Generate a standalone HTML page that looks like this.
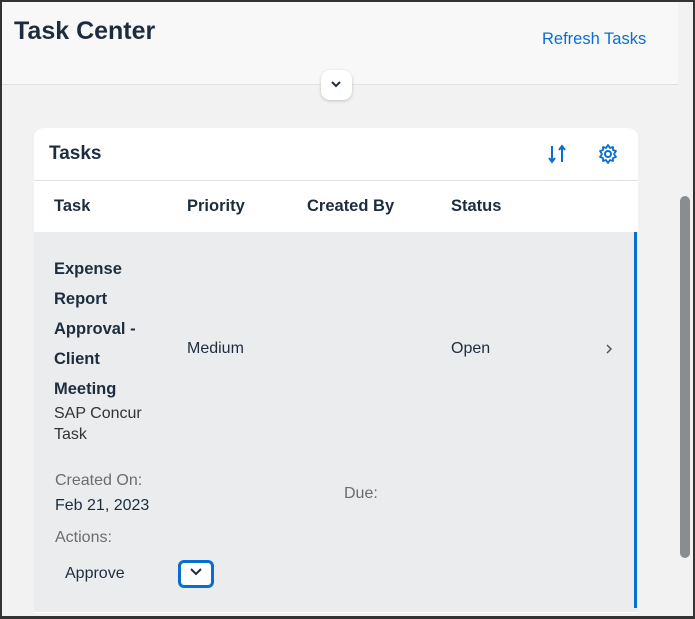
<!DOCTYPE html>
<html><head><style>
*{margin:0;padding:0;box-sizing:border-box}
body{width:695px;height:619px;overflow:hidden;background:#f2f2f3;font-family:"Liberation Sans",sans-serif;position:relative;color:#1d2d3e}
.frame{position:absolute;left:0;top:0;width:695px;height:619px;border:2px solid #333;border-bottom-width:3px;z-index:10;pointer-events:none}
.hdr{position:absolute;left:0;top:0;width:678px;height:85px;background:#f8f8f8;border-bottom:1px solid #e2e2e2}
.t{position:absolute;font-size:16px;white-space:nowrap}
.b{font-weight:bold}
.card{position:absolute;left:34px;top:128px;width:604px;height:485px;background:#fff;border-radius:10px 10px 0 0;overflow:hidden}
.row{position:absolute;left:0;top:104px;width:604px;height:380px;background:#ebecee}
</style></head><body>
<div class="hdr"></div>
<div class="t b" style="left:14px;top:17px;font-size:25px;color:#1d2d3e">Task Center</div>
<div class="t" style="left:542px;top:30px;font-size:16.5px;color:#0a6ed1">Refresh Tasks</div>
<div style="position:absolute;left:321px;top:70px;width:31px;height:30px;background:#fff;border-radius:9px;box-shadow:0 1px 3px rgba(0,0,0,.2)"></div>
<svg style="position:absolute;left:330px;top:79px" width="12" height="10"><path d="M2 3l4 4 4-4" stroke="#1d2d3e" stroke-width="2" fill="none"/></svg>
<div style="position:absolute;left:680px;top:196px;width:10px;height:362px;background:#8a8d90;border-radius:5px"></div>
<div class="card">
 <div style="position:absolute;left:0;top:52px;width:604px;height:1px;background:#e0e0e0"></div>
 <div class="row"></div>
 <div style="position:absolute;left:600px;top:104px;width:3px;height:376px;background:#0a6ed1"></div>
</div>
<div class="t b" style="left:49px;top:143px;font-size:19px">Tasks</div>
<svg style="position:absolute;left:547px;top:143px" width="22" height="22"><path d="M5 3v15M2 15l3 4 3-4M15 19V4M12 7l3-4 3 4" stroke="#0a6ed1" stroke-width="2" fill="none"/></svg>
<svg style="position:absolute;left:597px;top:143px" width="22" height="22"><circle cx="11" cy="11" r="3" stroke="#0a6ed1" stroke-width="2" fill="none"/><path d="M11 2l2 3 3-1 0 3 3 1-2 3 2 3-3 1 0 3-3-1-2 3-2-3-3 1 0-3-3-1 2-3-2-3 3-1 0-3 3 1z" stroke="#0a6ed1" stroke-width="1.8" fill="none" stroke-linejoin="round"/></svg>
<div class="t b" style="left:54px;top:197px;font-size:16.5px">Task</div>
<div class="t b" style="left:187px;top:197px;font-size:16.5px">Priority</div>
<div class="t b" style="left:307px;top:197px;font-size:16.5px">Created By</div>
<div class="t b" style="left:451px;top:197px;font-size:16.5px">Status</div>
<div class="t b" style="left:54px;top:254px;font-size:16.5px;line-height:30px">Expense<br>Report<br>Approval -<br>Client<br>Meeting</div>
<div class="t" style="left:54px;top:403px;font-size:16px;line-height:21px;color:#333">SAP Concur<br>Task</div>
<div class="t" style="left:187px;top:340px;font-size:16px">Medium</div>
<div class="t" style="left:451px;top:340px;font-size:16px">Open</div>
<svg style="position:absolute;left:604px;top:343px" width="10" height="12"><path d="M3 2l4 4-4 4" stroke="#555" stroke-width="1.5" fill="none"/></svg>
<div class="t" style="left:55px;top:472px;font-size:16px;color:#6a6d70">Created On:</div>
<div class="t" style="left:55px;top:497px;font-size:16px">Feb 21, 2023</div>
<div class="t" style="left:344px;top:485px;font-size:16px;color:#6a6d70">Due:</div>
<div class="t" style="left:55px;top:529px;font-size:16px;color:#6a6d70">Actions:</div>
<div class="t" style="left:65px;top:565px;font-size:16px">Approve</div>
<div style="position:absolute;left:178px;top:560px;width:36px;height:28px;border:3px solid #0a6ed1;border-radius:6px;background:#fff"></div>
<svg style="position:absolute;left:189px;top:567px" width="14" height="10"><path d="M2 2l5 5 5-5" stroke="#1d2d3e" stroke-width="2" fill="none"/></svg>
<div class="frame"></div>
</body></html>
